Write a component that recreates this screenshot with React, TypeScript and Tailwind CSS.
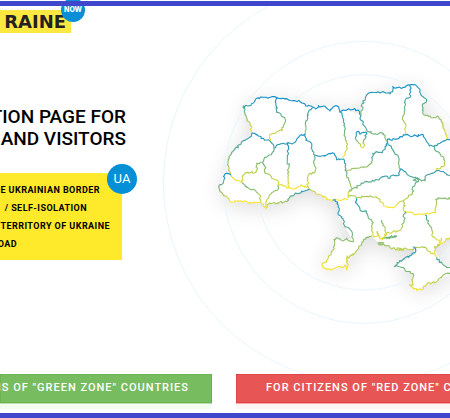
type Edge = { points: string; from: number; to: number };

const edges: Edge[] = [
  // Volyn, Rivne
  { points: "281,317 283,324 288,316 300,317 310,309 318,296 348,292 375,290 382,293", from: 290, to: 425 },
  { points: "281,317 283,335 292,358 300,375 305,380 301,388 307,398", from: 280, to: 400 },
  { points: "382,293 378,310 380,337 390,340 394,348 404,352 407,362 400,375 397,392 385,393 370,400 358,405 361,425", from: 293, to: 420 },
  { points: "307,398 315,400 325,408 340,415 350,420 361,424 372,445", from: 398, to: 548 },
  { points: "382,293 410,296 430,302 450,305 465,312 467,318 480,318 492,322", from: 290, to: 600 },
  { points: "492,322 478,330 475,345 466,370 465,402", from: 300, to: 450 },
  { points: "372,445 378,438 400,430 414,428 430,430 440,418 455,404 465,402", from: 402, to: 565 },
  // Lviv, Zakarpattia, Ivano-Frankivsk
  { points: "307,398 295,415 280,422 255,447 237,470 234,490 236,510 243,525 258,542 277,548", from: 380, to: 548 },
  { points: "277,548 277,528 290,518 318,516 323,508 320,490 338,486 345,472 357,465 370,455 372,445", from: 390, to: 560 },
  { points: "243,525 225,522 220,545 206,560 210,575 230,590 242,605 255,602 300,607 330,608", from: 522, to: 606 },
  { points: "277,548 290,560 300,568 315,570 330,585 332,605 348,625 350,600 365,578 383,570 385,553", from: 490, to: 625 },
  { points: "348,625 355,612 410,605 420,588 440,580 455,573 480,568", from: 560, to: 630 },
  // Ternopil, Khmelnytskyi
  { points: "414,428 414,450 412,475 417,500 414,530 417,563", from: 428, to: 566 },
  { points: "338,486 345,500 347,520 360,525 365,535 385,545 385,553 400,558 417,563 432,567 450,558 475,558", from: 428, to: 566 },
  { points: "465,402 467,420 485,430 487,450 496,466 493,480 496,515 475,525 473,558", from: 402, to: 566 },
  // Zhytomyr, Vinnytsia
  { points: "492,322 500,325 505,317 515,320 520,318 530,325 540,333 550,320 562,318 570,337", from: 315, to: 480 },
  { points: "570,337 576,345 580,365 584,380 582,405 590,425 592,445 585,458 578,472", from: 318, to: 475 },
  { points: "496,466 530,465 548,458 558,470 560,480 580,477 584,490 585,510 590,525 600,550 606,567 597,575 593,595", from: 455, to: 600 },
  { points: "473,558 480,568 495,575 510,585 525,590 530,598 550,600 593,597", from: 458, to: 600 },
  // Kyiv
  { points: "570,337 580,330 590,330 610,328 625,330 633,345 632,360 645,380 650,388 670,402 700,400 707,418 712,425", from: 328, to: 480 },
  { points: "590,512 605,506 630,503 655,497 667,480 668,460 685,457 697,458 705,440 712,428", from: 420, to: 550 },
  { points: "618,397 625,394 630,403 640,397 648,396 648,410 640,425 640,443 635,443 628,430 618,420 618,397", from: 394, to: 446 },
  // Chernihiv, Sumy
  { points: "633,345 637,330 637,310 650,285 660,278 680,278 700,275 720,282 728,275 728,260 745,262 760,262 778,255", from: 255, to: 405 },
  { points: "778,255 783,265 778,282 782,290 765,300 765,330 758,350 768,375 765,405", from: 255, to: 410 },
  { points: "778,255 798,256 810,272 813,285 830,302 817,313 822,345 840,348 850,353 865,350 873,358 880,380 885,395 893,420", from: 245, to: 420 },
  { points: "712,425 712,418 735,418 750,410 765,405 790,408 820,405 830,425 838,438 855,436", from: 405, to: 545 },
  // Kharkiv, Poltava
  { points: "855,436 870,430 885,422 905,420", from: 410, to: 550 },
  { points: "855,436 855,450 880,470 885,485 880,500 860,505 860,512", from: 400, to: 525 },
  { points: "712,425 725,445 745,470 745,490 750,507", from: 405, to: 570 },
  { points: "750,507 765,515 785,530 800,535 790,541 805,545 800,535 825,543 830,525 845,520 858,513 880,515 890,525 905,528", from: 500, to: 590 },
  // Cherkasy, Kirovohrad
  { points: "750,507 748,525 730,525 720,535 708,528 690,535 665,545 645,545 632,555 610,565 597,575", from: 505, to: 610 },
  { points: "593,588 625,592 660,587 690,598 700,612 710,620 735,620 750,605 760,603 775,590 787,580 788,560 800,545", from: 510, to: 622 },
  // Dnipropetrovsk, Zaporizhzhia
  { points: "760,603 765,635 790,640 815,642 840,640 857,638 857,598 880,595 905,595", from: 530, to: 642 },
  { points: "825,645 830,660 845,685 845,705 862,720 870,730 875,715 866,735 900,712", from: 610, to: 732 },
  { points: "870,735 853,740 853,755 860,772", from: 670, to: 760 },
  // Odesa, Mykolaiv
  { points: "548,600 563,607 568,625 565,645 580,657 585,680 602,690 605,710 610,725 595,722 590,715 580,723 565,715 552,718 553,745 535,770 530,785 515,792 525,805 545,810 560,802 575,802 585,795 590,810 592,790 590,775 610,765 635,735 648,712 665,708", from: 600, to: 805 },
  { points: "590,788 592,768 598,774 610,760", from: 650, to: 800 },
  { points: "618,595 620,610 630,630 650,635 655,655 670,668 665,690 668,705", from: 590, to: 725 },
  { points: "665,708 685,708 682,695 690,710 688,716 700,713 695,720 710,705 706,685 695,660", from: 600, to: 720 },
  { points: "702,704 715,698 740,693 755,685 760,670 765,635", from: 590, to: 720 },
  { points: "700,714 718,716 740,708 722,710 706,712", from: 660, to: 770 },
  // Kherson coast and Crimea
  { points: "683,727 690,735 700,728 688,727 720,743 740,748 762,750 740,744 790,750 790,740 820,742 840,755 855,765", from: 660, to: 775 },
  { points: "793,742 795,758 785,765 750,782 733,800 755,802 765,810 790,822 788,845 790,855 778,855 800,872 815,870 830,852 860,845 880,825 905,818", from: 745, to: 872 },
  { points: "860,772 868,782 880,795 890,803 905,803", from: 750, to: 860 },
];

const land =
  "M281 317L318 296L382 293L480 318L562 318L570 337L590 330L633 345L637 310L660 278L720 282L728 260L798 256L830 302L817 313L822 345L865 350L893 420L1050 420L1050 715L900 712L866 735L853 745L868 782L890 803L1000 803L1000 818L905 818L860 845L830 852L800 872L778 855L790 855L788 822L733 800L795 762L790 748L740 748L683 727L665 708L648 712L610 765L585 795L545 810L515 792L553 745L552 718L605 718L585 680L565 645L563 607L530 598L480 568L420 588L410 605L355 612L348 625L330 608L242 605L206 560L225 522L243 525L234 490L237 470L307 398Z";

/** Repeatable value in -0.5..0.5 used to roughen a border. */
function noise(n: number) {
  const s = Math.sin(n * 12.9898) * 43758.5453;
  return s - Math.floor(s) - 0.5;
}

function borderPath(points: string) {
  const list = points.split(" ").map((p) => p.split(",").map(Number));
  let d = `M${list[0][0]} ${list[0][1]}`;
  for (let i = 1; i < list.length; i++) {
    const [ax, ay] = list[i - 1];
    const [bx, by] = list[i];
    const steps = Math.max(1, Math.round(Math.hypot(bx - ax, by - ay) / 5));
    for (let k = 1; k <= steps; k++) {
      const t = k / steps;
      const amount = k === steps ? 0 : 7;
      const x = ax + (bx - ax) * t + noise(ax + by * 3 + k) * amount;
      const y = ay + (by - ay) * t + noise(ay + bx * 5 + k) * amount;
      d += `L${x.toFixed(1)} ${y.toFixed(1)}`;
    }
  }
  return d;
}

function CountryMap() {
  return (
    <svg
      className="block h-[368px] w-full"
      viewBox="0 18 900 1104"
      preserveAspectRatio="xMinYMin slice"
      role="img"
      aria-label="Map of Ukraine"
    >
      <defs>
        <filter id="soft" x="-30%" y="-30%" width="160%" height="160%">
          <feGaussianBlur stdDeviation="34" />
        </filter>
        {edges.map((e, i) => (
          <linearGradient key={i} id={`edge${i}`} gradientUnits="userSpaceOnUse" x1="0" x2="0" y1={e.from} y2={e.to}>
            <stop offset="0" stopColor="#1090d0" />
            <stop offset="0.5" stopColor="#74b67c" />
            <stop offset="1" stopColor="#fbe62e" />
          </linearGradient>
        ))}
      </defs>
      <path d={land} transform="translate(0 12)" fill="#000" opacity="0.14" filter="url(#soft)" />
      <g fill="none" stroke="#e8f6fe" strokeWidth="3">
        <circle cx="642" cy="547" r="323" />
        <circle cx="642" cy="547" r="423" />
        <circle cx="642" cy="547" r="602" />
      </g>
      <path d={land} fill="#fff" />
      <g fill="none" strokeWidth="3.4" strokeLinejoin="round">
        {edges.map((e, i) => (
          <path key={i} d={borderPath(e.points)} stroke={`url(#edge${i})`} />
        ))}
      </g>
    </svg>
  );
}

export default function App() {
  return (
    <div className="relative flex min-h-screen flex-col overflow-hidden bg-white font-['Roboto',sans-serif] text-black">
      <div className="relative z-10 mt-px h-[5px] shrink-0 bg-[#3f48cc]" />

      <main className="flex">
        <div className="w-[150px] shrink-0">
          <header className="mt-1 flex">
            <a href="#home" className="relative flex h-[23px] w-[71px] items-center justify-end bg-[#fde842] pr-[5px]">
              <span className="font-['DejaVu_Sans',sans-serif] text-[18px] leading-none font-bold text-[#222]">RAINE</span>
              <span className="absolute -top-[12px] -right-[14px] flex size-6 items-center justify-center rounded-full bg-[#0a8fd6] font-['Inter',sans-serif] text-[7px] font-extrabold text-white">
                NOW
              </span>
            </a>
          </header>

          <h1 className="mt-[73px] flex w-[126px] flex-col items-end text-[19px] leading-[22px] font-medium whitespace-nowrap">
            <span>TION PAGE FOR</span>
            <span>AND VISITORS</span>
          </h1>

          <section className="relative mt-[23px] h-[87px] w-[122px] bg-[#ffe92b] pt-2">
            <ul className="flex flex-col text-[9px] leading-[18px] font-bold tracking-wider whitespace-nowrap">
              <li className="flex justify-end pr-[22px]">E UKRAINIAN BORDER</li>
              <li className="flex justify-end pr-[35px]">/ SELF-ISOLATION</li>
              <li className="flex justify-end pr-[12px]">TERRITORY OF UKRAINE</li>
              <li className="flex justify-end pr-[105px]">OAD</li>
            </ul>
            <button
              type="button"
              className="absolute -top-[9px] -right-[15px] flex size-[30px] items-center justify-center rounded-full bg-[#058fd7] text-[13px] text-white"
            >
              UA
            </button>
          </section>
        </div>

        <div className="min-w-0 flex-1">
          <CountryMap />
        </div>
      </main>

      <nav className="flex gap-6 text-[11px] font-medium tracking-[1px] whitespace-nowrap text-white">
        <a
          href="#green"
          className="flex h-[29px] w-[212px] shrink-0 items-center justify-end border border-[#6cb452] bg-[#77bc5f] pr-[22px] shadow-[0_1px_0_#b9dfac,0_6px_0_#f4fdf1]"
        >
          NS OF "GREEN ZONE" COUNTRIES
        </a>
        <a
          href="#red"
          className="flex h-[29px] min-w-0 flex-1 items-center overflow-hidden border-y border-l border-[#e04444] bg-[#e75555] pl-[29px] shadow-[0_1px_0_#f3a9a9,0_6px_0_#fff5f5]"
        >
          FOR CITIZENS OF "RED ZONE" COUNTRIES
        </a>
      </nav>

      <div className="mt-[10px] h-[5px] shrink-0 bg-[#3f48cc]" />
    </div>
  );
}
